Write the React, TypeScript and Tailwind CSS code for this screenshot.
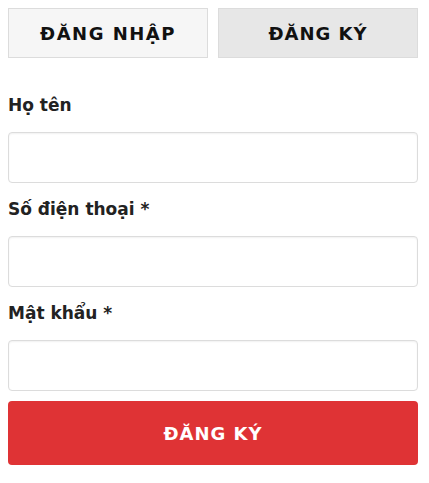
import React from "react";

const font = { fontFamily: '"DejaVu Sans", "Noto Sans", Arial, sans-serif' };

function Field({ label, first }: { label: string; first?: boolean }) {
  return (
    <div>
      <div
        className={`${first ? "mt-[35px]" : "mt-[14px]"} mb-[15px] h-[24px] text-[17px] leading-[24px] font-bold text-[#222]`}
      >
        {label}
      </div>
      <input
        type="text"
        className="block w-full h-[51px] rounded-[4px] border border-[#dcdcdc] bg-white shadow-[inset_0_1px_2px_rgba(0,0,0,0.06)] outline-none px-3"
      />
    </div>
  );
}

export default function App() {
  return (
    <div className="w-[429px] h-[483px] bg-white pt-2 pl-2" style={font}>
      <div className="w-[410px]">
        <div className="flex gap-[10px]">
          <button className="flex-1 h-[50px] border border-[#dcdcdc] bg-[#f6f6f6] text-[18px] font-bold text-[#111] tracking-[1.5px]">
            ĐĂNG NHẬP
          </button>
          <button className="flex-1 h-[50px] border border-[#dcdcdc] bg-[#e7e7e7] text-[18px] font-bold text-[#111] tracking-[1px]">
            ĐĂNG KÝ
          </button>
        </div>
        <Field label="Họ tên" first />
        <Field label="Số điện thoại *" />
        <Field label="Mật khẩu *" />
        <button className="mt-[10px] w-full h-[64px] rounded-[4px] bg-[#df3335] text-white text-[18px] font-bold tracking-[1px]">
          ĐĂNG KÝ
        </button>
      </div>
    </div>
  );
}
